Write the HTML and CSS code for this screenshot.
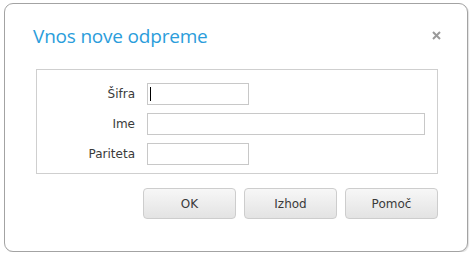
FILE: index.html
```html
<!DOCTYPE html>
<html lang="sl">
  <head>
    <meta charset="UTF-8" />
    <title>Vnos nove odpreme</title>
    <link rel="stylesheet" href="styles.css">
  </head>
  <body>
    <div class="dialog">
      <div class="dialog-head">
        <h1 class="dialog-title">Vnos nove odpreme</h1>
        <span class="close">
          <svg width="9" height="9" viewBox="0 0 9 9">
            <path d="M1 1 L8 8 M8 1 L1 8" stroke="#9a9a9a" stroke-width="2" />
          </svg>
        </span>
      </div>

      <div class="box">
        <label class="lbl" for="sifra">Šifra</label>
        <span class="field caret">
          <input type="text" id="sifra" class="inp short" />
        </span>
        <label class="lbl" for="ime">Ime</label>
        <span class="field">
          <input type="text" id="ime" class="inp wide" />
        </span>
        <label class="lbl" for="pariteta">Pariteta</label>
        <span class="field">
          <input type="text" id="pariteta" class="inp short" />
        </span>
      </div>

      <div class="buttons">
        <button class="btn">OK</button>
        <button class="btn">Izhod</button>
        <button class="btn">Pomoč</button>
      </div>
    </div>
  </body>
</html>
```

FILE: styles.css
```css
html {
  font-family: "DejaVu Sans", Verdana, sans-serif;
}

body {
  margin: 0;
  background-color: #fff;
}

.dialog {
  box-sizing: border-box;
  width: 464px;
  height: 249px;
  margin: 3px 0 0 4px;
  border: 1px solid #a3a3a3;
  border-radius: 9px;
  box-shadow: 1px 1px 1px rgba(0, 0, 0, 0.12);
  padding: 0 29px 0 31px;
  background-color: #fff;
}

.dialog-head {
  display: flex;
  align-items: flex-start;
  justify-content: space-between;
  height: 65px;
  margin-left: -3px;
}

.dialog-title {
  margin: 19px 0 0 0;
  font-family: "Open Sans", sans-serif;
  font-weight: normal;
  font-size: 19px;
  line-height: normal;
  letter-spacing: -0.2px;
  color: #2b9ddb;
}

.close {
  display: flex;
  margin-right: -3px;
  margin-top: 27px;
}

.box {
  display: grid;
  grid-template-columns: 98px auto;
  column-gap: 12px;
  row-gap: 8px;
  align-items: center;
  border: 1px solid #cfcfcf;
  padding: 13px 0 8px 0;
}

.lbl {
  text-align: right;
  font-size: 12px;
  color: #3a3a3a;
}

.field {
  position: relative;
  display: flex;
}

.inp {
  box-sizing: border-box;
  height: 22px;
  border: 1px solid #c8c8c8;
  padding: 0 3px;
  margin: 0;
  font-family: "DejaVu Sans", sans-serif;
  font-size: 12px;
  outline: none;
}

.short {
  width: 102px;
}

.wide {
  width: 278px;
}

.caret::after {
  content: "";
  position: absolute;
  left: 3px;
  top: 4px;
  width: 1px;
  height: 14px;
  background-color: #000;
}

.buttons {
  display: flex;
  justify-content: flex-end;
  gap: 8px;
  margin-top: 14px;
}

.btn {
  width: 93px;
  height: 31px;
  border: 1px solid #cdcdcd;
  border-radius: 4px;
  background: linear-gradient(#f7f7f7, #e3e3e3);
  font-family: "DejaVu Sans", sans-serif;
  font-size: 12px;
  color: #3a3a3a;
  cursor: pointer;
}
```
